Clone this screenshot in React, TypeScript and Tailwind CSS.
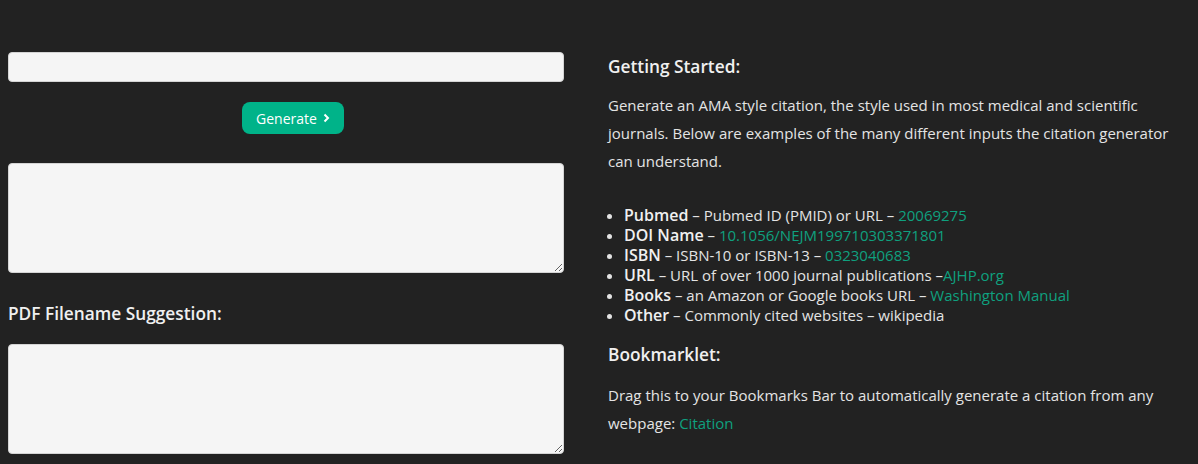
import React from "react";

const font = { fontFamily: '"Open Sans", "Noto Sans", sans-serif' };

export default function App() {
  const items: { b: string; t: string; l?: string }[] = [
    { b: "Pubmed", t: " – Pubmed ID (PMID) or URL – ", l: "20069275" },
    { b: "DOI Name", t: " – ", l: "10.1056/NEJM199710303371801" },
    { b: "ISBN", t: " – ISBN-10 or ISBN-13 – ", l: "0323040683" },
    { b: "URL", t: " – URL of over 1000 journal publications –", l: "AJHP.org" },
    { b: "Books", t: " – an Amazon or Google books URL – ", l: "Washington Manual" },
    { b: "Other", t: " – Commonly cited websites – wikipedia" },
  ];
  return (
    <div className="w-[1198px] h-[464px] bg-[#222222] overflow-hidden text-[#e4e4e4]" style={font}>
      <div className="flex gap-[44px] pl-2">
        <div className="w-[556px] flex flex-col pt-[52px]">
          <input className="h-[30px] w-full rounded-[4px] bg-[#f5f5f5] border border-[#d4d4d4] outline-none" />
          <div className="flex justify-center mt-[20px] pl-[14px]">
            <button className="h-[32px] w-[102px] rounded-[8px] bg-[#00b389] text-white text-[14px] flex items-center justify-center gap-[6px]">
              <span>Generate</span>
              <svg width="7" height="10" viewBox="0 0 7 10" fill="none">
                <path d="M1.5 1.5L5 5L1.5 8.5" stroke="white" strokeWidth="2" />
              </svg>
            </button>
          </div>
          <textarea className="mt-[29px] h-[110px] w-full rounded-[4px] bg-[#f5f5f5] border border-[#d4d4d4] outline-none block" />
          <div className="mt-[29px] text-[17.3px] leading-[24px] font-semibold text-[#f0f0f0]">PDF Filename Suggestion:</div>
          <textarea className="mt-[18px] h-[110px] w-full rounded-[4px] bg-[#f5f5f5] border border-[#d4d4d4] outline-none block" />
        </div>
        <div className="flex-1 pt-[55px] pr-4">
          <div className="text-[17.3px] leading-[24px] font-semibold text-[#f0f0f0]">Getting Started:</div>
          <p className="mt-[12px] text-[15px] leading-[28px]">
            Generate an AMA style citation, the style used in most medical and scientific
            <br />
            journals. Below are examples of the many different inputs the citation generator
            <br />
            can understand.
          </p>
          <ul className="mt-[30px] list-disc pl-[16px] text-[15px]">
            {items.map((it) => (
              <li key={it.b} className="leading-[20px] h-[20px] whitespace-nowrap">
                <span className="font-semibold text-[16px] leading-[20px] text-[#f0f0f0]">{it.b}</span>
                {it.t}
                {it.l && <span className="text-[#0fa07f]">{it.l}</span>}
              </li>
            ))}
          </ul>
          <div className="mt-[18px] text-[17.3px] leading-[24px] font-semibold text-[#f0f0f0]">Bookmarklet:</div>
          <p className="mt-[14px] text-[15px] leading-[28px]">
            Drag this to your Bookmarks Bar to automatically generate a citation from any
            <br />
            webpage: <span className="text-[#0fa07f]">Citation</span>
          </p>
        </div>
      </div>
    </div>
  );
}
